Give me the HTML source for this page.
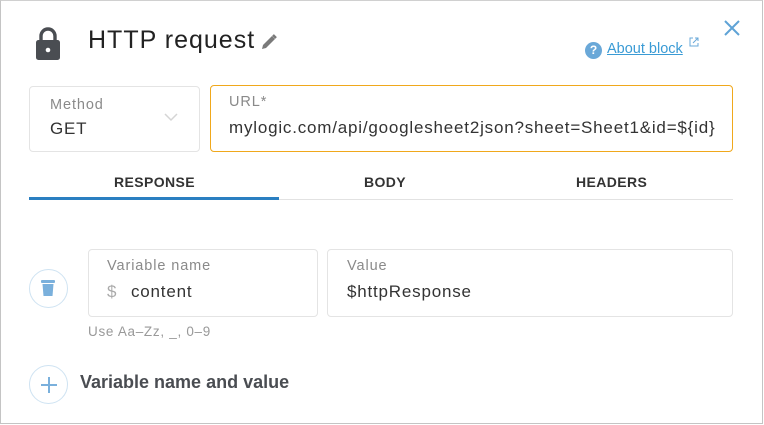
<!DOCTYPE html>
<html><head><style>
*{margin:0;padding:0;box-sizing:border-box}
body{width:764px;height:425px;background:#fff;font-family:"Liberation Sans",sans-serif;position:relative;overflow:hidden}
.frame{position:absolute;left:0;top:0;width:763px;height:424px;border:1px solid #c4c4c4;border-top-color:#d0d0d0}
.abs{position:absolute}
.box{position:absolute;border:1px solid #e4e4e4;border-radius:4px}
.lbl{position:absolute;font-size:14.5px;color:#8a8a8a;letter-spacing:.9px}
.val{position:absolute;font-size:17px;color:#333;letter-spacing:.8px}
.tab{position:absolute;top:174px;font-size:14px;font-weight:bold;color:#333;letter-spacing:.4px}
.circ{position:absolute;width:39px;height:39px;border:1px solid #cfe3f2;border-radius:50%}
</style></head><body>
<div class="frame"></div>
<svg class="abs" style="left:35px;top:27px" width="26" height="34" viewBox="0 0 26 34">
<path d="M6 14V9a7 7 0 0 1 14 0v5" fill="none" stroke="#4a4d52" stroke-width="3.4"/>
<rect x="1" y="13" width="24" height="20" rx="2.5" fill="#4a4d52"/>
<circle cx="13" cy="23" r="2.3" fill="#fff"/></svg>
<div class="abs" style="left:88px;top:26px;font-size:25px;color:#222;letter-spacing:1px">HTTP request</div>
<svg class="abs" style="left:260px;top:33px" width="18" height="18" viewBox="0 0 18 18"><path d="M2 16l1-4 9-9 3 3-9 9z" fill="#7a7a7a"/><path d="M13 2l3 3" stroke="#7a7a7a" stroke-width="2.5"/></svg>
<svg class="abs" style="left:723px;top:19px" width="18" height="18" viewBox="0 0 18 18"><path d="M2 2l14 14M16 2L2 16" stroke="#5fa3d6" stroke-width="2"/></svg>
<div class="abs" style="left:585px;top:42px;width:17px;height:17px;border-radius:50%;background:#6aa8d8;color:#fff;font-size:12px;font-weight:bold;text-align:center;line-height:17px">?</div>
<div class="abs" style="left:607px;top:41px;font-size:14.5px;color:#3a9bd5;text-decoration:underline">About block</div>
<svg class="abs" style="left:689px;top:37px" width="10" height="10" viewBox="0 0 10 10"><path d="M4 1H1v8h8V6M6 1h3v3M9 1L4 6" fill="none" stroke="#6aa8d8" stroke-width="1"/></svg>
<div class="box" style="left:29px;top:86px;width:171px;height:66px"></div>
<div class="lbl" style="left:50px;top:97px">Method</div>
<div class="val" style="left:50px;top:119px">GET</div>
<svg class="abs" style="left:164px;top:113px" width="14" height="9" viewBox="0 0 14 9"><path d="M1 1l6 6 6-6" fill="none" stroke="#d5d5d5" stroke-width="1.5"/></svg>
<div class="box" style="left:210px;top:85px;width:523px;height:67px;border-color:#f0a81c"></div>
<div class="lbl" style="left:229px;top:94px">URL*</div>
<div class="abs" style="left:229px;top:118px;width:490px;overflow:hidden;white-space:nowrap;font-size:17px;color:#333;letter-spacing:.8px">mylogic.com/api/googlesheet2json?sheet=Sheet1&amp;id=${id}</div>
<div class="tab" style="left:114px">RESPONSE</div>
<div class="tab" style="left:364px">BODY</div>
<div class="tab" style="left:576px">HEADERS</div>
<div class="abs" style="left:29px;top:199px;width:704px;height:1px;background:#e2e2e2"></div>
<div class="abs" style="left:29px;top:197px;width:250px;height:3px;background:#2a7fc1"></div>
<div class="circ" style="left:29px;top:269px"></div>
<svg class="abs" style="left:41px;top:279px" width="14" height="18" viewBox="0 0 14 18"><rect x="0" y="1" width="14" height="3" rx="1" fill="#7ab0dc"/><path d="M1.5 5h11l-1 12h-9z" fill="#7ab0dc"/></svg>
<div class="box" style="left:88px;top:249px;width:230px;height:68px"></div>
<div class="lbl" style="left:107px;top:258px">Variable name</div>
<div class="abs" style="left:107px;top:282px;font-size:17px;color:#aaa">$</div>
<div class="val" style="left:131px;top:282px">content</div>
<div class="box" style="left:327px;top:249px;width:406px;height:68px"></div>
<div class="lbl" style="left:347px;top:258px">Value</div>
<div class="val" style="left:347px;top:282px">$httpResponse</div>
<div class="abs" style="left:88px;top:324px;font-size:13.5px;color:#999;letter-spacing:.7px">Use Aa–Zz, _, 0–9</div>
<div class="circ" style="left:29px;top:365px"></div>
<svg class="abs" style="left:40px;top:376px" width="18" height="18" viewBox="0 0 18 18"><path d="M9 1v16M1 9h16" stroke="#7ab0dc" stroke-width="2"/></svg>
<div class="abs" style="left:80px;top:372px;font-size:18px;font-weight:bold;color:#4a4d52">Variable name and value</div>
</body></html>
